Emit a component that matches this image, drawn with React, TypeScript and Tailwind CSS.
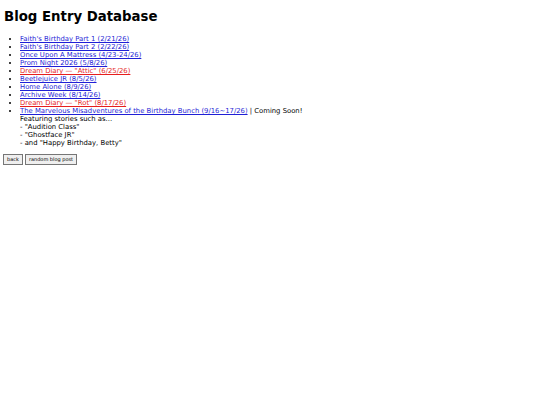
import React from 'react';

type Entry = { title: string; red?: boolean };

const entries: Entry[] = [
  { title: "Faith's Birthday Part 1 (2/21/26)" },
  { title: "Faith's Birthday Part 2 (2/22/26)" },
  { title: 'Once Upon A Mattress (4/23-24/26)' },
  { title: 'Prom Night 2026 (5/8/26)' },
  { title: 'Dream Diary — "Attic" (6/25/26)', red: true },
  { title: 'Beetlejuice JR (8/5/26)' },
  { title: 'Home Alone (8/9/26)' },
  { title: 'Archive Week (8/14/26)' },
  { title: 'Dream Diary — "Rot" (8/17/26)', red: true },
];

export default function App() {
  return (
    <div className="min-h-[405px] w-[540px] bg-white px-[4px] py-[9px] font-['DejaVu_Sans',sans-serif] text-black">
      <h1 className="mb-[10px] text-[13.3px] font-bold leading-[16px]">Blog Entry Database</h1>
      <ul className="mb-[7px] list-disc pl-[16px] text-[6.85px] leading-[8px]">
        {entries.map((e) => (
          <li key={e.title}>
            <a href="#" className={e.red ? 'text-[#e61e1e] underline' : 'text-[#1f1fd6] underline'}>
              {e.title}
            </a>
          </li>
        ))}
        <li>
          <a href="#" className="text-[#1f1fd6] underline">
            The Marvelous Misadventures of the Birthday Bunch (9/16~17/26)
          </a>{' '}
          | Coming Soon!
          <br />
          Featuring stories such as...
          <br />- "Audition Class"
          <br />- "Ghostface JR"
          <br />- and "Happy Birthday, Betty"
        </li>
      </ul>
      <div className="flex gap-[2px] text-[5px] leading-[7px]">
        <button className="-ml-[1px] border border-[#767676] bg-[#efefef] px-[3px] py-[1px] font-['DejaVu_Sans',sans-serif]">
          back
        </button>
        <button className="border border-[#767676] bg-[#efefef] px-[3px] py-[1px] font-['DejaVu_Sans',sans-serif]">
          random blog post
        </button>
      </div>
    </div>
  );
}
